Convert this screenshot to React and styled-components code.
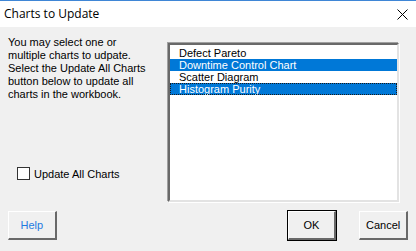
import React from "react";
import styled, { createGlobalStyle } from "styled-components";

const Global = createGlobalStyle`
  html, body { margin: 0; padding: 0; background: #f0f0f0; }
  body { width: 416px; height: 251px; overflow: hidden; }
`;

const Window = styled.div`
  width: 416px;
  height: 251px;
  box-sizing: border-box;
  border-top: 1px solid #3f86d6;
  background: #f0f0f0;
  display: flex;
  flex-direction: column;
  font-family: "Liberation Sans", Arial, sans-serif;
  font-size: 11px;
  color: #000;
`;

const TitleBar = styled.div`
  height: 26px;
  background: #fff;
  display: flex;
  align-items: center;
  justify-content: space-between;
  padding: 0 8px 0 4px;
`;

const Title = styled.span`
  font-family: "Open Sans", "Noto Sans", sans-serif;
  font-size: 12px;
  color: #000;
  margin-top: -1px;
`;

const CloseGlyph = styled.svg`
  width: 11px;
  height: 11px;
  display: block;
`;

const Main = styled.div`
  display: flex;
  padding: 9px 17px 0 8px;
`;

const LeftPane = styled.div`
  width: 160px;
  display: flex;
  flex-direction: column;
  padding-bottom: 22px;
`;

const Paragraph = styled.p`
  margin: 0;
  line-height: 13px;
  white-space: nowrap;
`;

const CheckRow = styled.label`
  margin-top: auto;
  margin-left: 9px;
  display: flex;
  align-items: center;
  gap: 4px;
  height: 13px;
`;

const Box = styled.span`
  width: 13px;
  height: 13px;
  box-sizing: border-box;
  border: 1px solid #333;
  background: #fff;
`;

const ListBox = styled.div`
  margin-top: 7px;
  width: 231px;
  height: 159px;
  box-sizing: border-box;
  background: #fff;
  border-style: solid;
  border-width: 2px;
  border-color: #696969 #e3e3e3 #e3e3e3 #696969;
  box-shadow: -1px -1px 0 0 #a0a0a0, 1px 1px 0 0 #fff;
  padding-top: 2px;
`;

const Item = styled.div`
  height: 12px;
  line-height: 12px;
  padding-left: 9px;
  box-sizing: border-box;
  white-space: nowrap;
  background: ${(p) => (p.$selected ? "#0078d7" : "transparent")};
  color: ${(p) => (p.$selected ? "#fff" : "#000")};
  outline: ${(p) => (p.$focus ? "1px dotted #1a1a1a" : "none")};
  outline-offset: -1px;
`;

const Footer = styled.div`
  display: flex;
  align-items: center;
  padding: 9px 8px 0 8px;
`;

const Button = styled.button`
  width: 49px;
  height: 29px;
  box-sizing: border-box;
  font-family: "Liberation Sans", Arial, sans-serif;
  font-size: 11px;
  color: ${(p) => p.$color || "#000"};
  background: #f0f0f0;
  padding: 0;
  border-style: solid;
  border-width: 1px 2px 2px 1px;
  border-color: #fff #696969 #696969 #fff;
  outline: none;
  margin-left: ${(p) => p.$ml || "0"};
`;

const DefaultButton = styled(Button)`
  box-shadow: 0 0 0 1px #000;
`;

const items = [
  { label: "Defect Pareto" },
  { label: "Downtime Control Chart", selected: true },
  { label: "Scatter Diagram" },
  { label: "Histogram Purity", selected: true, focus: true },
];

const lines = [
  "You may select one or",
  "multiple charts to udpate.",
  "Select the Update All Charts",
  "button below to update all",
  "charts in the workbook.",
];

export default function App() {
  return (
    <>
      <Global />
      <Window>
        <TitleBar>
          <Title>Charts to Update</Title>
          <CloseGlyph viewBox="0 0 11 11">
            <path d="M0.5 0.5 L10.5 10.5 M10.5 0.5 L0.5 10.5" stroke="#000" strokeWidth="1" />
          </CloseGlyph>
        </TitleBar>
        <Main>
          <LeftPane>
            <Paragraph>
              {lines.map((l, i) => (
                <React.Fragment key={i}>
                  {l}
                  {i < lines.length - 1 && <br />}
                </React.Fragment>
              ))}
            </Paragraph>
            <CheckRow>
              <Box />
              <span>Update All Charts</span>
            </CheckRow>
          </LeftPane>
          <ListBox>
            {items.map((it) => (
              <Item key={it.label} $selected={it.selected} $focus={it.focus}>
                {it.label}
              </Item>
            ))}
          </ListBox>
        </Main>
        <Footer>
          <Button $color="#1f7ae0">Help</Button>
          <DefaultButton $ml="231px">OK</DefaultButton>
          <Button $ml="23px">Cancel</Button>
        </Footer>
      </Window>
    </>
  );
}
